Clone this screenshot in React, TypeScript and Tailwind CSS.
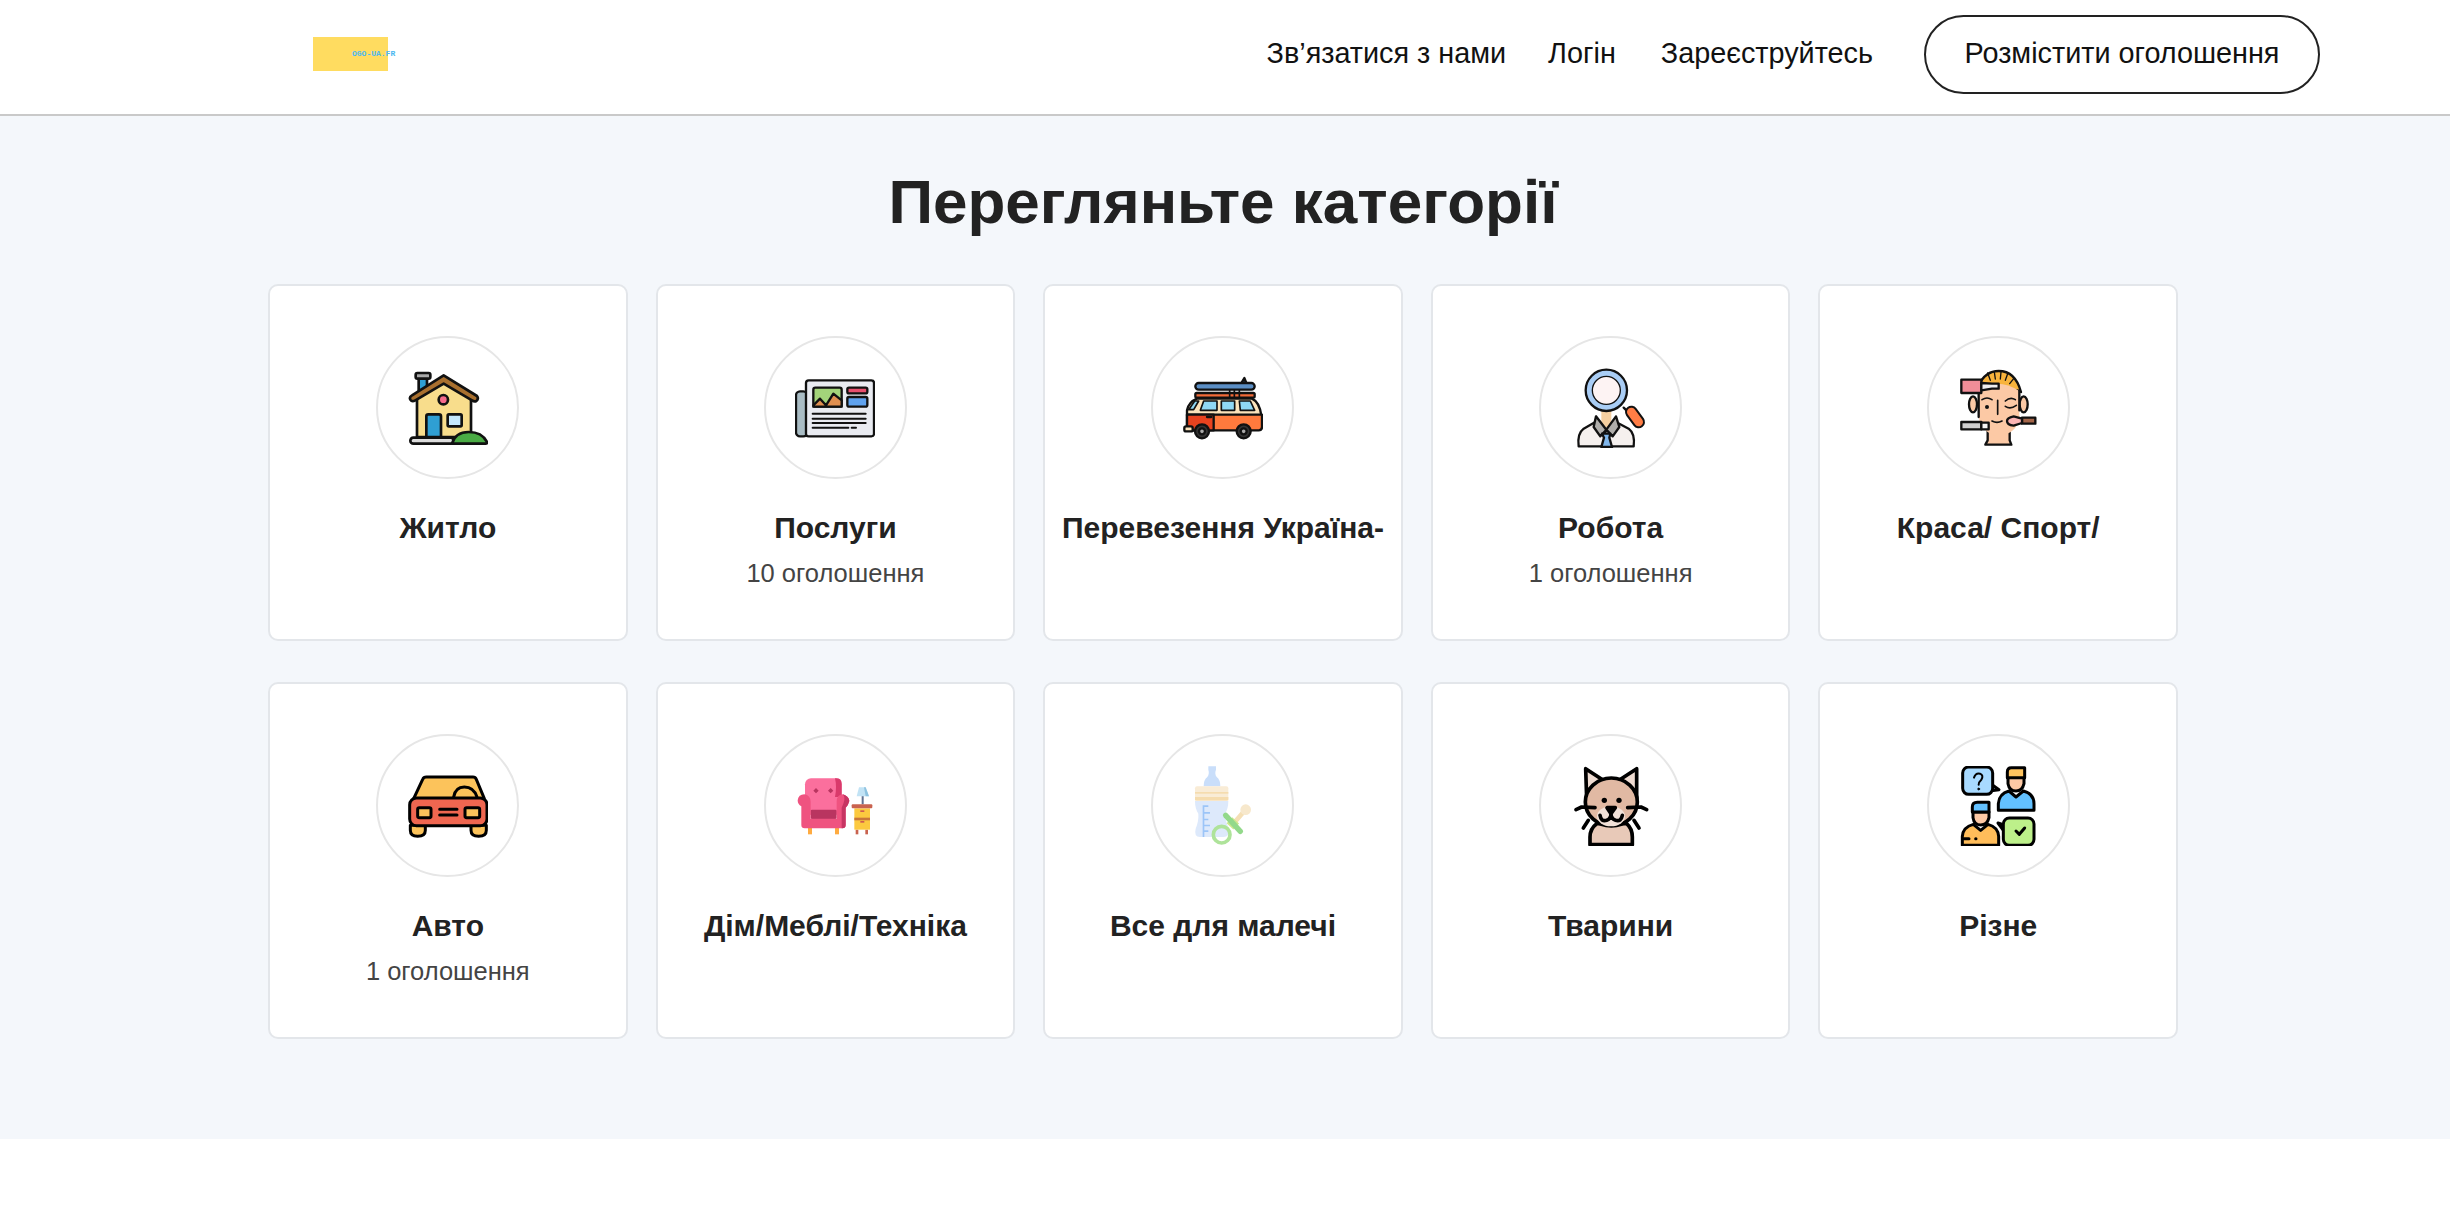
const font = "font-['Liberation_Sans',Arial,sans-serif]"

function HouseIcon() {
  return (
    <svg viewBox="143 113 240 240" className="w-20 h-20" stroke="#111" strokeWidth="8" strokeLinejoin="round" strokeLinecap="round">
      <rect x="175" y="140" width="25" height="40" fill="#2f9fd3" />
      <rect x="166" y="128" width="44" height="17" rx="5" fill="#a8a8a8" />
      <path d="M170 205 L250 155 L332 205 V320 H170 Z" fill="#f8dd8c" />
      <path d="M250 135 L350 197 Q356 205 348 212 Q342 215 335 210 L250 160 L165 210 Q155 216 150 208 Q146 200 155 195 Z" fill="#a9702f" />
      <circle cx="249" cy="208" r="14" fill="#f56a8c" />
      <path d="M198 320 V258 Q198 252 204 252 H236 Q242 252 242 258 V320 Z" fill="#2f9fd3" />
      <rect x="262" y="252" width="42" height="36" rx="4" fill="#c5e8fd" />
      <rect x="150" y="322" width="130" height="18" rx="9" fill="#dcdcdc" />
      <path d="M275 340 Q285 305 325 305 Q365 305 380 335 Q382 340 375 340 Z" fill="#4aab45" />
    </svg>
  )
}

function NewsIcon() {
  return (
    <svg viewBox="135 113 240 240" className="w-20 h-20" stroke="#111" strokeWidth="7" strokeLinejoin="round" strokeLinecap="round">
      <rect x="138" y="183" width="34" height="135" rx="12" fill="#a9bcc4" />
      <rect x="168" y="150" width="204" height="168" rx="8" fill="#e9ebf1" />
      <rect x="190" y="172" width="85" height="57" rx="6" fill="#a3d47a" />
      <path d="M190 225 L210 205 L228 225 L250 190 L275 210 V229 H190 Z" fill="#e08f50" />
      <rect x="292" y="172" width="60" height="17" rx="5" fill="#e8506e" />
      <rect x="292" y="200" width="60" height="29" rx="5" fill="#5fa2ef" />
      <path d="M188 250 H347 M188 265 H347 M188 278 H347 M188 292 H295 M305 292 H318" fill="none" strokeWidth="6" />
    </svg>
  )
}

function VanIcon() {
  return (
    <svg viewBox="143 113 240 240" className="w-20 h-20" stroke="#111" strokeWidth="7" strokeLinejoin="round" strokeLinecap="round">
      <path d="M318 158 L327 143 L333 158 Z" fill="#2b5f96" />
      <rect x="180" y="188" width="178" height="14" rx="4" fill="#f26b38" />
      <path d="M283 175 V205 M297 175 V205 M312 175 V205" fill="none" strokeWidth="5" />
      <rect x="180" y="158" width="178" height="20" rx="10" fill="#5b8ec4" />
      <path d="M155 255 V240 Q160 215 185 205 H350 Q372 215 378 255 Z" fill="#fbe3bb" />
      <path d="M160 238 L178 212 H190 L175 238 Z M205 212 H245 V240 H195 Z M258 212 H298 V240 H258 Z M312 212 H345 L358 240 H315 Z" fill="#8fd8f5" strokeWidth="5" />
      <path d="M155 253 H380 V290 Q380 300 370 300 H155 Z" fill="#ff7a3d" />
      <path d="M155 253 H235 V300 H155 Z" fill="#e8431f" />
      <path d="M215 260 H228" fill="none" />
      <rect x="147" y="288" width="25" height="15" rx="5" fill="#fbe3bb" />
      <circle cx="200" cy="303" r="21" fill="#333" />
      <circle cx="200" cy="303" r="9" fill="#aaa" />
      <circle cx="325" cy="303" r="21" fill="#333" />
      <circle cx="325" cy="303" r="9" fill="#aaa" />
    </svg>
  )
}

function JobIcon() {
  return (
    <svg viewBox="137 113 240 240" className="w-20 h-20" stroke="#111" strokeWidth="7" strokeLinejoin="round" strokeLinecap="round">
      <rect x="228" y="240" width="30" height="50" fill="#f5cfa0" stroke="none" />
      <path d="M160 348 Q155 310 175 295 L210 275 L240 305 L272 275 L310 295 Q330 310 325 348 Z" fill="#f5f0ee" />
      <path d="M212 258 L205 290 L225 318 L243 298 L262 318 L282 290 L272 258 L243 298 Z" fill="#b0aeab" />
      <path d="M230 310 H255 L252 322 L260 350 H228 L236 322 Z" fill="#7fb5ea" />
      <path d="M295 232 L310 247" fill="none" />
      <path d="M318 245 L340 275" fill="none" stroke="#111" strokeWidth="38" />
      <path d="M318 245 L340 275" fill="none" stroke="#ff7d45" strokeWidth="26" />
      <circle cx="243" cy="180" r="62" fill="#a9cdf5" />
      <circle cx="243" cy="180" r="42" fill="#fdf3f3" strokeWidth="4" />
    </svg>
  )
}

function BeautyIcon() {
  return (
    <svg viewBox="143 113 240 240" className="w-20 h-20" stroke="#111" strokeWidth="7" strokeLinejoin="round" strokeLinecap="round">
      <path d="M205 165 Q225 122 265 122 Q315 122 332 185 L320 180 H215 Z" fill="#f8b33c" />
      <path d="M232 128 L240 150 M252 125 L255 146 M272 125 L270 146 M292 130 L285 150 M310 145 L298 160" fill="none" strokeWidth="4" />
      <ellipse cx="188" cy="222" rx="12" ry="24" fill="#fcc9a5" />
      <ellipse cx="340" cy="222" rx="12" ry="24" fill="#fcc9a5" />
      <path d="M232 300 V330 L225 343 H303 L298 330 V300 Z" fill="#fcc9a5" />
      <path d="M205 180 Q260 140 327 182 V260 Q320 310 265 318 Q215 310 205 260 Z" fill="#fcc9a5" stroke="none" />
      <path d="M205 185 V260 M327 180 V240" fill="none" />
      <path d="M215 208 Q230 198 245 208 M285 212 Q300 198 315 208 M285 228 Q300 238 318 225 M262 210 V252 M245 272 Q260 280 275 272" fill="none" strokeWidth="5" />
      <circle cx="230" cy="230" r="6" fill="#111" stroke="none" />
      <rect x="153" y="148" width="60" height="40" fill="#f08d98" />
      <path d="M213 158 L245 160 H265 V175 H245 L213 180 Z" fill="#eeeeee" />
      <rect x="153" y="275" width="60" height="22" fill="#cfcfcf" />
      <path d="M213 277 H235 V297 H213 Z" fill="#f5f5f5" />
      <rect x="335" y="262" width="40" height="18" fill="#a5664a" />
      <path d="M335 265 L310 258 Q290 262 290 272 Q290 284 310 286 L335 278 Z" fill="#fbb4b4" />
    </svg>
  )
}

function CarIcon() {
  return (
    <svg viewBox="143 107 240 240" className="w-20 h-20" stroke="#000" strokeWidth="9" strokeLinejoin="round" strokeLinecap="round">
      <path d="M150 285 V300 Q150 318 172 318 Q195 318 195 300 V285 Z" fill="#fcc35b" />
      <path d="M332 285 V300 Q332 318 355 318 Q378 318 378 300 V285 Z" fill="#fcc35b" />
      <path d="M160 205 L187 147 Q190 140 198 140 H338 Q345 140 348 147 L372 205 Z" fill="#fcc35b" />
      <path d="M280 200 Q285 170 312 170 Q340 170 350 200" fill="none" />
      <rect x="148" y="203" width="232" height="83" rx="20" fill="#ef6650" />
      <rect x="172" y="232" width="40" height="30" rx="5" fill="#fcc35b" />
      <rect x="314" y="232" width="44" height="30" rx="5" fill="#fcc35b" />
      <path d="M238 237 H290 M238 254 H290" fill="none" />
    </svg>
  )
}

function SofaIcon() {
  return (
    <svg viewBox="118 107 240 240" className="w-20 h-20">
      <rect x="157" y="288" width="12" height="24" fill="#ffab40" />
      <rect x="238" y="288" width="12" height="24" fill="#ffab40" />
      <rect x="148" y="144" width="110" height="110" rx="18" fill="#fb6f9d" />
      <path d="M238 144 H242 Q258 144 258 160 V200 H238 Q244 170 238 144 Z" fill="#d93a6b" />
      <rect x="165" y="238" width="78" height="28" rx="4" fill="#b93560" />
      <path d="M137 228 Q126 222 126 210 Q128 192 146 192 Q165 195 165 215 V265 H243 V215 Q243 192 262 192 Q280 198 281 212 Q278 225 270 232 V284 Q270 294 260 294 H147 Q137 294 137 284 Z" fill="#ef5380" />
      <path d="M270 232 Q278 225 281 212 Q280 198 262 192 Q272 205 258 232 V294 H260 Q270 294 270 284 Z" fill="#c73563" />
      <path d="M181 173 L189 181 L181 189 L173 181 Z M225 173 L233 181 L225 189 L217 181 Z" fill="#b93560" />
      <rect x="318" y="197" width="6" height="25" fill="#607090" />
      <path d="M310 171 H330 L340 198 H303 Z" fill="#c2e3f5" />
      <path d="M325 171 H330 L340 198 H330 Z" fill="#8fc3e0" />
      <rect x="300" y="298" width="8" height="14" fill="#c9634f" />
      <rect x="329" y="298" width="8" height="14" fill="#c9634f" />
      <rect x="296" y="234" width="47" height="64" fill="#fcc93f" />
      <rect x="296" y="262" width="47" height="8" fill="#c9763a" />
      <rect x="314" y="240" width="12" height="5" fill="#d05b4f" />
      <rect x="314" y="272" width="12" height="5" fill="#d05b4f" />
      <rect x="288" y="222" width="62" height="12" rx="3" fill="#c9634f" />
    </svg>
  )
}

function BottleIcon() {
  return (
    <svg viewBox="1204 107 240 240" className="w-20 h-20">
      <path d="M1280 108 H1303 V118 Q1298 130 1305 140 Q1316 148 1316 168 H1266 Q1266 148 1277 140 Q1284 130 1280 118 Z" fill="#c9defa" />
      <path d="M1240 212 H1340 Q1340 235 1330 250 Q1330 270 1342 295 Q1345 320 1325 320 H1255 Q1236 320 1242 295 Q1252 270 1250 250 Q1240 235 1240 212 Z" fill="#dde9fb" />
      <rect x="1240" y="168" width="100" height="44" rx="6" fill="#f9ecd6" />
      <rect x="1240" y="185" width="100" height="5" fill="#f5dcae" />
      <rect x="1240" y="200" width="100" height="10" fill="#f5dcae" />
      <path d="M1263 225 H1280 V230 H1268 V245 H1285 V250 H1268 V265 H1280 V270 H1268 V283 H1285 V288 H1268 V300 H1280 V305 H1268 V320 H1263 Z" fill="#9cc5f8" />
      <path d="M1355 280 L1390 240" stroke="#f5dfb5" strokeWidth="14" fill="none" />
      <circle cx="1392" cy="238" r="16" fill="#f7e8cc" />
      <path d="M1345 288 L1362 270" stroke="#cde98d" strokeWidth="28" fill="none" />
      <path d="M1332 255 L1376 303" stroke="#93d98b" strokeWidth="16" strokeLinecap="round" fill="none" />
      <circle cx="1320" cy="313" r="25" stroke="#aee39a" strokeWidth="11" fill="none" />
    </svg>
  )
}

function CatIcon() {
  return (
    <svg viewBox="118 107 240 240" className="w-20 h-20" stroke="#000" strokeWidth="11" strokeLinejoin="round" strokeLinecap="round">
      <path d="M175 343 V320 Q175 295 195 280 H285 Q302 295 302 320 V343 Z" fill="#e8c9b8" />
      <path d="M162 115 L215 150 L165 205 Z" fill="#efdcd2" />
      <path d="M315 115 L262 150 L315 205 Z" fill="#efdcd2" />
      <ellipse cx="239" cy="215" rx="78" ry="72" fill="#e1b9a3" />
      <ellipse cx="238" cy="258" rx="42" ry="30" fill="#f1e1d8" stroke="none" />
      <circle cx="218" cy="210" r="8" fill="#000" stroke="none" />
      <circle cx="262" cy="210" r="8" fill="#000" stroke="none" />
      <path d="M226 232 H251 L238 250 Z" fill="#000" />
      <path d="M205 255 Q208 275 225 270 Q238 265 238 250 Q238 265 252 270 Q268 275 272 255" fill="none" />
      <path d="M133 238 L150 230 L190 232 M345 238 L328 230 L288 232 M155 293 L170 270 M322 293 L307 270" fill="none" />
    </svg>
  )
}

function PeopleIcon() {
  return (
    <svg viewBox="1192 107 240 240" className="w-20 h-20" stroke="#000" strokeWidth="9" strokeLinejoin="round" strokeLinecap="round">
      <path d="M1290 160 L1315 178 L1280 183 Z" fill="#a8daff" />
      <rect x="1206" y="110" width="90" height="82" rx="18" fill="#a8daff" />
      <path d="M1240 142 Q1245 127 1258 130 Q1270 135 1262 148 Q1254 155 1254 163" fill="none" strokeWidth="6" />
      <circle cx="1254" cy="176" r="3" fill="#000" strokeWidth="2" />
      <path d="M1313 240 V220 Q1315 190 1345 182 L1366 200 L1388 182 Q1420 190 1420 220 V240 Z" fill="#63c1ff" />
      <path d="M1342 140 H1390 V160 Q1385 182 1366 182 Q1346 182 1342 160 Z" fill="#fdc9a5" />
      <path d="M1340 142 V125 Q1340 112 1352 112 H1392 V142 Z" fill="#ffc45f" />
      <path d="M1205 345 V318 Q1207 290 1238 282 L1260 300 L1282 282 Q1312 290 1314 318 V345 Z" fill="#ffbd5a" />
      <path d="M1237 245 H1285 V262 Q1280 284 1260 284 Q1240 284 1237 262 Z" fill="#fdc9a5" />
      <path d="M1235 245 V230 Q1235 216 1250 216 H1285 V245 Z" fill="#63c1ff" />
      <path d="M1210 325 H1225 M1245 325 H1246" fill="none" />
      <path d="M1335 285 L1312 278 L1332 305 Z" fill="#bdf08a" />
      <rect x="1328" y="263" width="92" height="82" rx="18" fill="#bdf08a" />
      <path d="M1366 302 L1376 312 L1392 293" fill="none" />
    </svg>
  )
}

const categories = [
  { title: "Житло", icon: <HouseIcon /> },
  { title: "Послуги", count: "10 оголошення", icon: <NewsIcon /> },
  { title: "Перевезення Україна-", icon: <VanIcon /> },
  { title: "Робота", count: "1 оголошення", icon: <JobIcon /> },
  { title: "Краса/ Спорт/", icon: <BeautyIcon /> },
  { title: "Авто", count: "1 оголошення", icon: <CarIcon /> },
  { title: "Дім/Меблі/Техніка", icon: <SofaIcon /> },
  { title: "Все для малечі", icon: <BottleIcon /> },
  { title: "Тварини", icon: <CatIcon /> },
  { title: "Різне", icon: <PeopleIcon /> },
]

export default function App() {
  return (
    <div className={`min-h-[1222px] bg-white text-[#111] ${font}`}>
      <header className="h-[116px] flex items-center justify-between pl-[313px] pr-[130px] pb-[6px] bg-white border-b-2 border-[#c9c9c9]">
        <div className="w-[75px] h-[34px] bg-[#ffdc60] flex items-center pl-[39px] whitespace-nowrap font-['Liberation_Mono',monospace] text-[8px] font-bold text-[#4db8f0]">
          OGO-UA.FR
        </div>
        <nav className="flex items-center text-[28.8px]">
          <a className="mr-[42px]">Зв’язатися з нами</a>
          <a className="mr-[45px]">Логін</a>
          <a className="mr-[51px]">Зареєструйтесь</a>
          <a className="w-[396px] h-[79px] flex items-center justify-center rounded-full border-2 border-[#222]">
            Розмістити оголошення
          </a>
        </nav>
      </header>
      <main className="bg-[#f4f7fb] pt-[52px] pb-[100px]">
        <h1 className="text-center text-[62px] leading-[68px] font-bold text-[#222] pr-[4px] mb-[48px]">Перегляньте категорії</h1>
        <div className="w-[1910px] ml-[268px] grid grid-cols-5 gap-x-[28px] gap-y-[41px]">
          {categories.map((c) => (
            <div key={c.title} className="h-[357px] bg-white border-2 border-[#e3e6ea] rounded-[10px] flex flex-col items-center pt-[50px]">
              <div className="w-[143px] h-[143px] rounded-full border-2 border-[#e6e6e6] flex items-center justify-center">
                {c.icon}
              </div>
              <div className="mt-[31px] text-[30px] leading-[36px] font-bold text-[#222] whitespace-nowrap">{c.title}</div>
              {c.count && <div className="mt-[12px] text-[25.5px] leading-[30px] text-[#444]">{c.count}</div>}
            </div>
          ))}
        </div>
      </main>
    </div>
  )
}
